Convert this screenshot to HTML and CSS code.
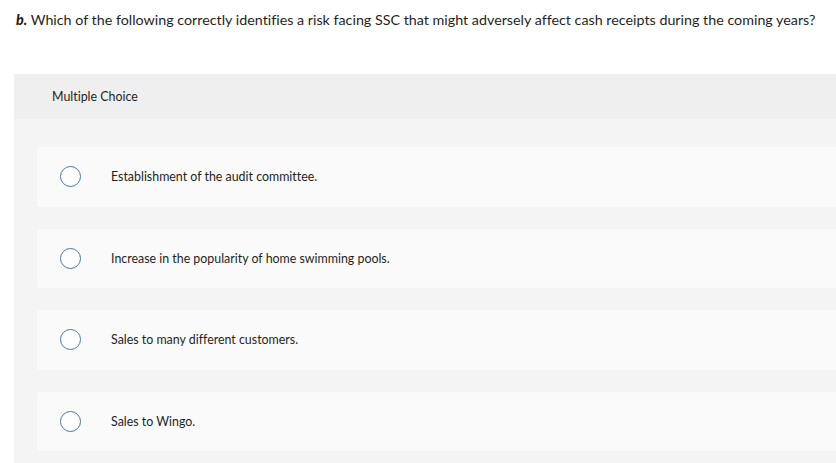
FILE: index.html
```html
<!DOCTYPE html>
<html>
<head>
<meta charset="utf-8">
<link rel="stylesheet" href="styles.css">
</head>
<body>
<p class="question"><b class="qnum">b.</b> Which of the following correctly identifies a risk facing SSC that might adversely affect cash receipts during the coming years?</p>
<section class="panel">
  <div class="panel-header">Multiple Choice</div>
  <div class="options">
    <label class="option"><span class="radio"></span><span class="option-text">Establishment of the audit committee.</span></label>
    <label class="option"><span class="radio"></span><span class="option-text">Increase in the popularity of home swimming pools.</span></label>
    <label class="option"><span class="radio"></span><span class="option-text">Sales to many different customers.</span></label>
    <label class="option"><span class="radio"></span><span class="option-text">Sales to Wingo.</span></label>
  </div>
</section>
</body>
</html>
```
FILE: styles.css
```css
html, body {
  margin: 0;
  padding: 0;
  background: #ffffff;
  font-family: "Lato", "Liberation Sans", sans-serif;
  font-variant-ligatures: none;
  color: #1f1f1f;
  overflow: hidden;
}
.question {
  margin: 0;
  padding: 11px 0 0 16px;
  font-size: 14.3px;
  line-height: 18px;
  white-space: nowrap;
}
.qnum {
  font-style: italic;
  font-weight: 900;
}
.panel {
  margin: 45px 0 0 14px;
}
.panel-header {
  height: 45px;
  background: #efefef;
  display: flex;
  align-items: center;
  padding-left: 38px;
  font-size: 12.4px;
}
.options {
  background: #f4f4f4;
  padding: 28px 0 20px 23px;
  display: flex;
  flex-direction: column;
  gap: 22px;
}
.option {
  height: 59.5px;
  background: #fafafa;
  border-radius: 3px 0 0 3px;
  display: flex;
  align-items: center;
  padding-left: 23px;
}
.radio {
  width: 19px;
  height: 19px;
  border: 1.5px solid #4a76a8;
  border-radius: 50%;
  background: #ffffff;
  flex: none;
}
.option-text {
  margin-left: 30px;
  font-size: 12.4px;
}
```
